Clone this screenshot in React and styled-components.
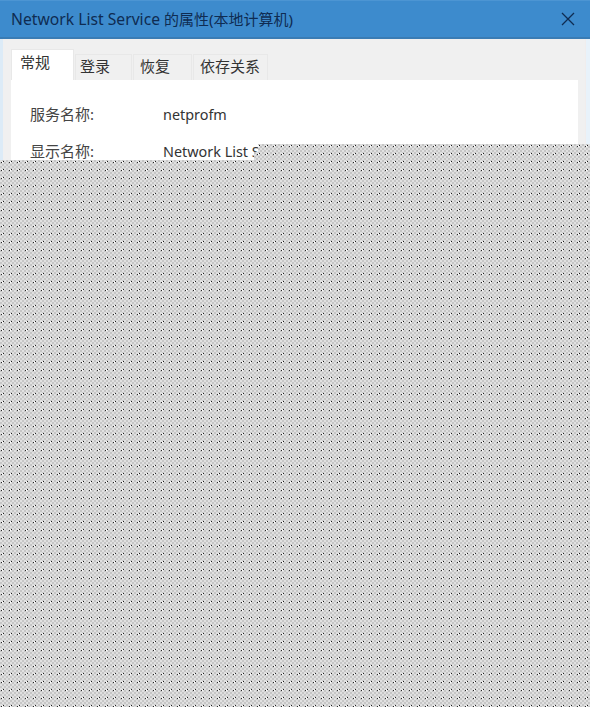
import React from "react";
import styled, { createGlobalStyle } from "styled-components";

const Global = createGlobalStyle`
  html, body {
    margin: 0;
    padding: 0;
    background: #fff;
  }
`;

const Page = styled.div`
  position: relative;
  width: 590px;
  height: 707px;
  overflow: hidden;
  font-family: "Noto Sans", "Noto Sans CJK SC", sans-serif;
  color: #222;
`;

const TitleBar = styled.div`
  box-sizing: border-box;
  height: 39px;
  background: #3d8bcd;
  border-top: 1px solid #4c95d3;
  border-bottom: 2px solid #3a7cb4;
  display: flex;
  align-items: center;
  justify-content: space-between;
  padding: 0 15px 0 11px;
  color: #0f2c52;
  font-size: 15px;
`;

const TitleLatin = styled.span`
  font-size: 15.7px;
`;

const Body = styled.div`
  box-sizing: border-box;
  height: 668px;
  padding: 10px 8px 0 8px;
  background: #f0f0f0;
  border-left: 3px solid #dcebf7;
  border-right: 4px solid #e8f2fa;
  box-shadow: inset -1px 0 0 #f0eded;
`;

const Tabs = styled.div`
  display: flex;
  align-items: flex-end;
  height: 31px;
`;

const Tab = styled.div`
  box-sizing: border-box;
  width: ${(p) => p.$width}px;
  height: ${(p) => (p.$active ? "31px" : "26px")};
  margin-right: ${(p) => p.$gap || 0}px;
  padding-left: ${(p) => p.$inset}px;
  background: ${(p) => (p.$active ? "#fff" : "#f0f0f0")};
  border: 1px solid #e8e8e8;
  border-bottom: none;
  font-size: 15px;
  line-height: ${(p) => (p.$active ? "25px" : "22px")};
  color: #333;
`;

const Panel = styled.div`
  background: #fff;
  height: 100%;
  padding: 24px 19px;
  display: flex;
  flex-direction: column;
  gap: 16px;
`;

const Row = styled.div`
  display: flex;
  font-size: 15px;
  line-height: 21px;
`;

const Label = styled.div`
  width: 133px;
  color: #444;
`;

const Value = styled.div`
  font-size: 14.4px;
  color: #333;
`;

const Dither = styled.svg`
  position: absolute;
  inset: 0;
  clip-path: polygon(
    258px 144px,
    100% 144px,
    100% 100%,
    0 100%,
    0 160px,
    254px 160px,
    254px 152px,
    258px 152px
  );
`;

// one 8x8 tile of the dither: 2px checker with a black/white speck
const checker = [
  [0, 0],
  [4, 0],
  [2, 2],
  [6, 2],
  [0, 4],
  [4, 4],
  [2, 6],
  [6, 6],
];

const specks = [
  [3, 1, "#1c1c1c"],
  [2, 2, "#fff"],
  [1, 2, "#2a2a2a"],
  [2, 1, "#f4f4f4"],
];

export default function App() {
  return (
    <Page>
      <Global />
      <TitleBar>
        <span>
          <TitleLatin>Network List Service</TitleLatin> 的属性(本地计算机)
        </span>
        <svg width="14" height="14" viewBox="0 0 14 14">
          <path d="M1 1L13 13M13 1L1 13" stroke="#0f2c52" strokeWidth="1.3" fill="none" />
        </svg>
      </TitleBar>
      <Body>
        <Tabs>
          <Tab $active $width={63} $gap={1} $inset={8}>常规</Tab>
          <Tab $width={57} $gap={1} $inset={4}>登录</Tab>
          <Tab $width={59} $gap={1} $inset={6}>恢复</Tab>
          <Tab $width={75} $inset={6}>依存关系</Tab>
        </Tabs>
        <Panel>
          <Row>
            <Label>服务名称:</Label>
            <Value>netprofm</Value>
          </Row>
          <Row>
            <Label>显示名称:</Label>
            <Value>Network List Service</Value>
          </Row>
        </Panel>
      </Body>
      <Dither width="590" height="707">
        <defs>
          <pattern id="dither" width="8" height="8" patternUnits="userSpaceOnUse">
            <rect width="8" height="8" fill="#c6c6c6" />
            {checker.map(([x, y]) => (
              <rect key={`${x}-${y}`} x={x} y={y} width="2" height="2" fill="#e0e0e0" />
            ))}
            {specks.map(([x, y, c]) => (
              <rect key={`${x}-${y}`} x={x} y={y} width="1" height="1" fill={c} />
            ))}
          </pattern>
        </defs>
        <rect width="590" height="707" fill="url(#dither)" />
      </Dither>
    </Page>
  );
}
